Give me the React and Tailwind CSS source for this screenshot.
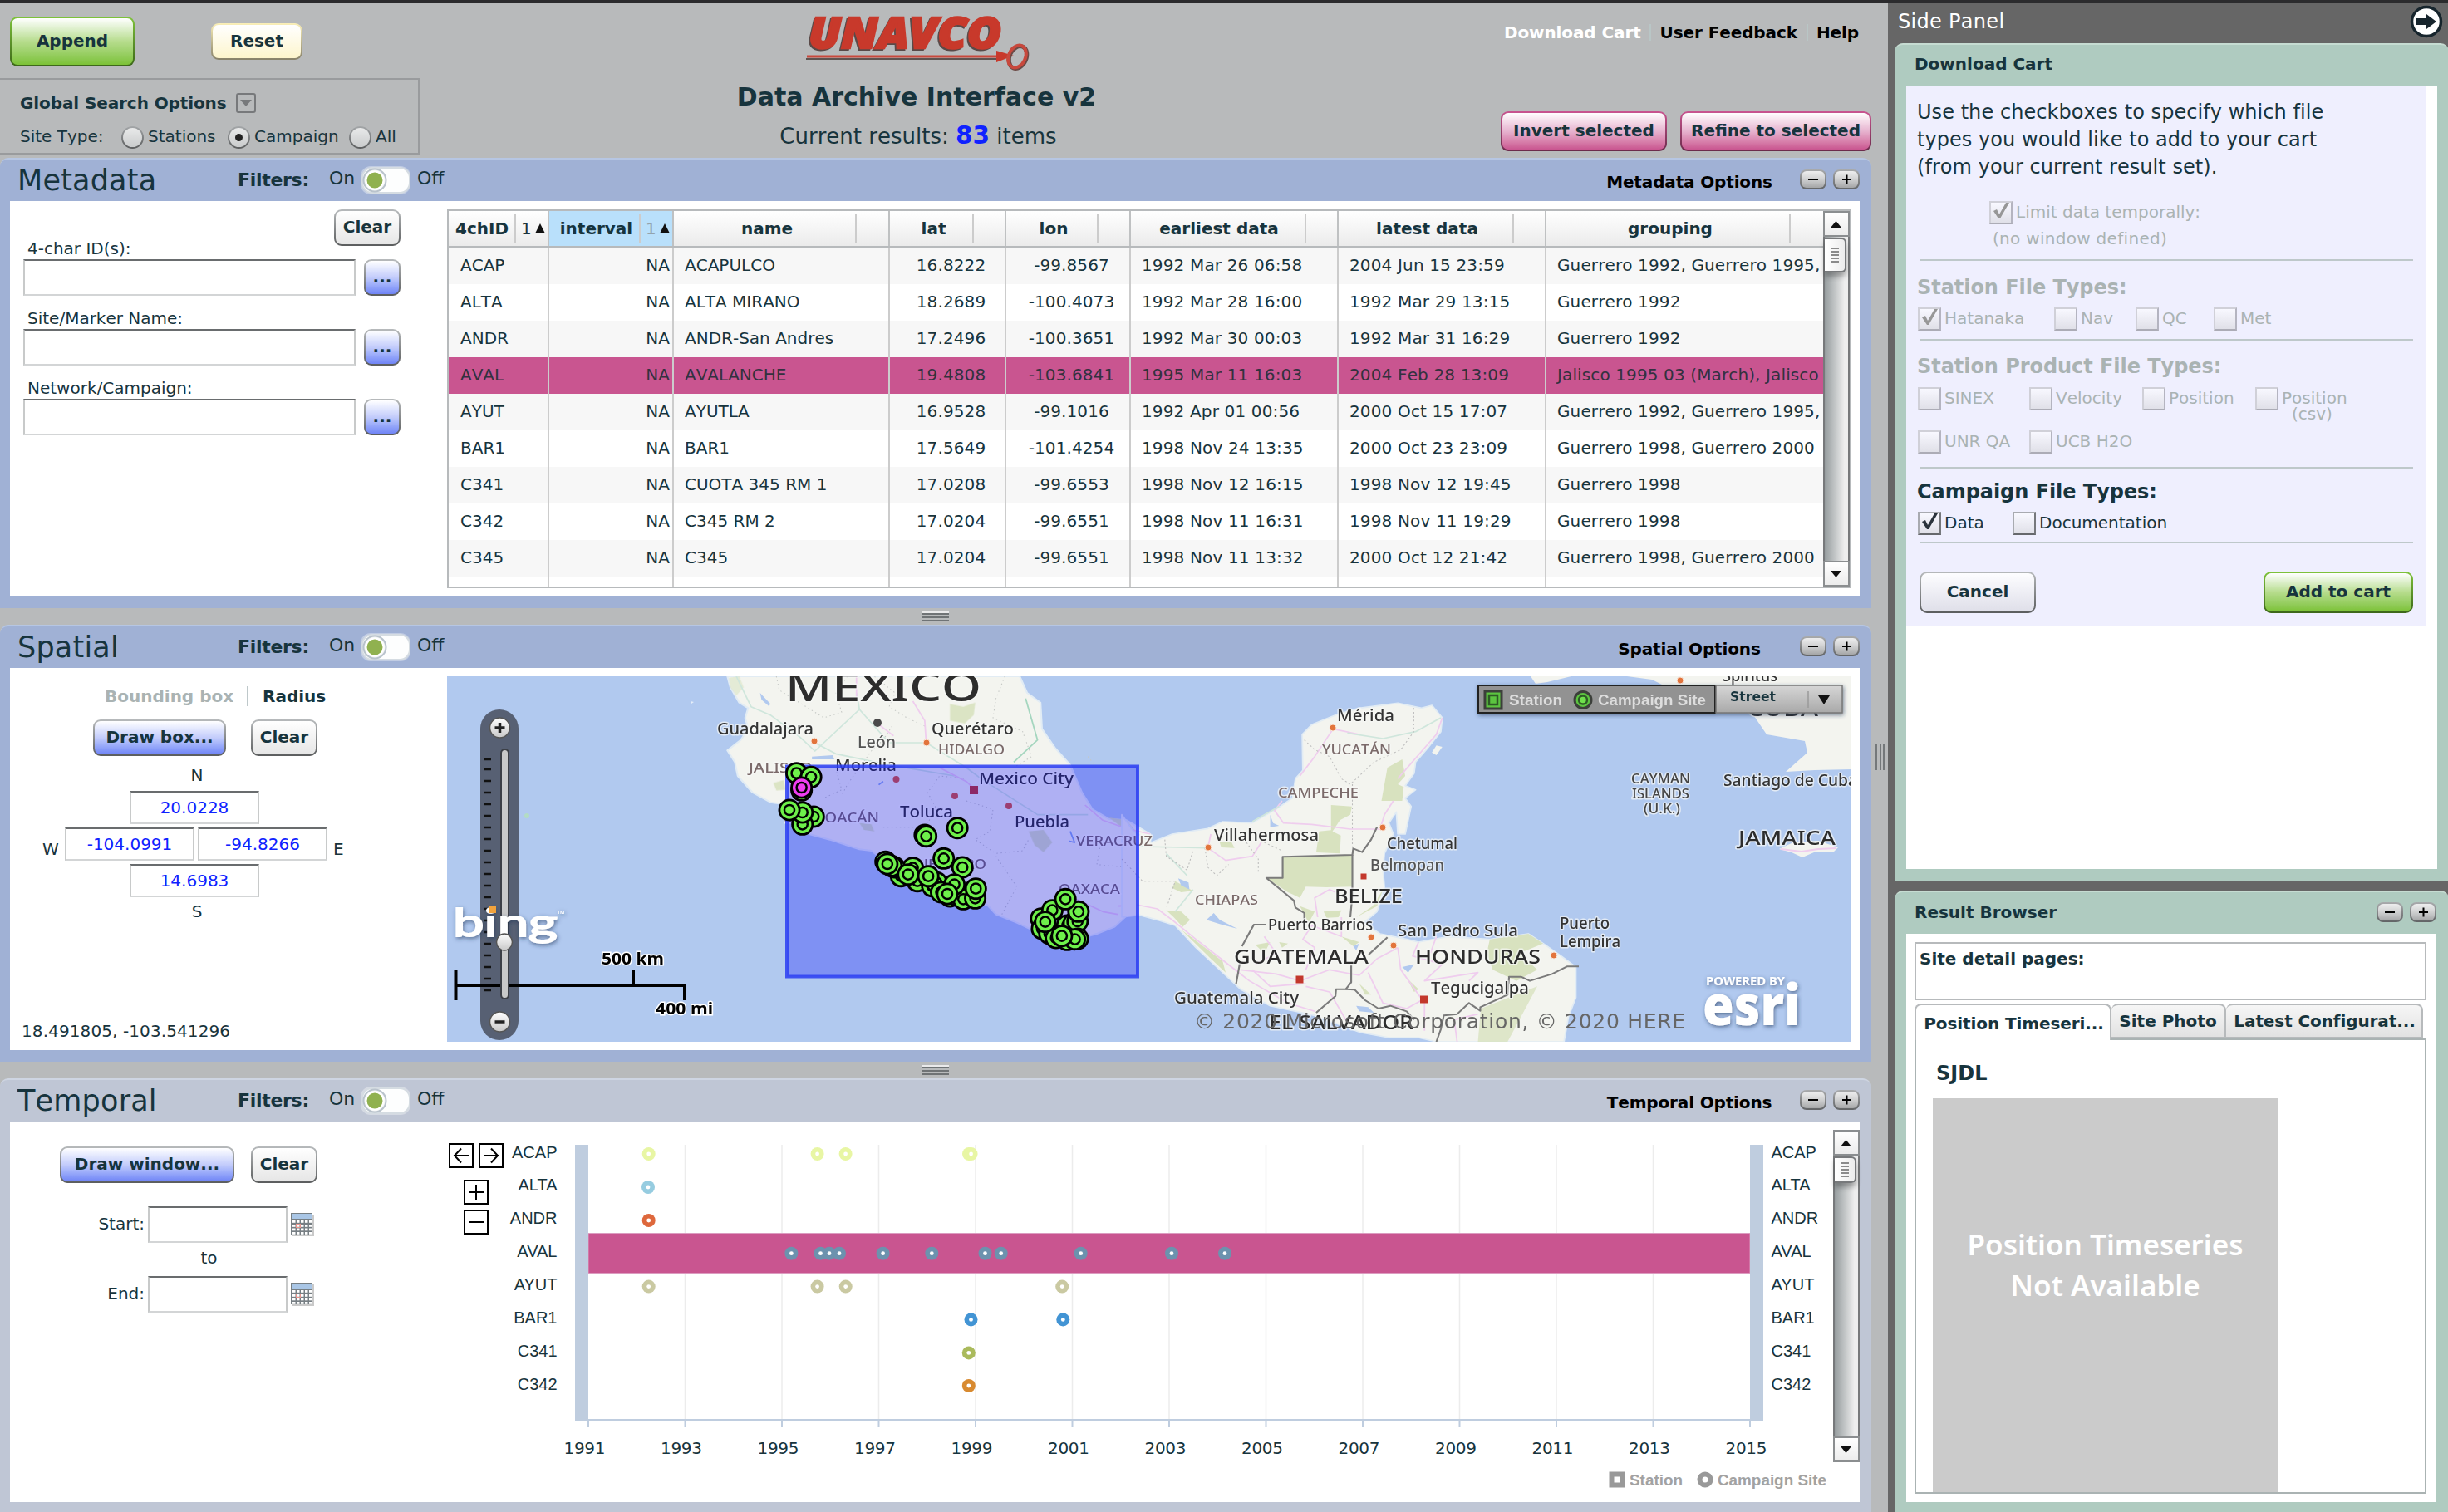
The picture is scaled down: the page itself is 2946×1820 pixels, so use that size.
import React from "react";

const rows = [
  ["ACAP", "ACAPULCO", "16.8222", "-99.8567", "1992 Mar 26 06:58", "2004 Jun 15 23:59", "Guerrero 1992, Guerrero 1995,"],
  ["ALTA", "ALTA MIRANO", "18.2689", "-100.4073", "1992 Mar 28 16:00", "1992 Mar 29 13:15", "Guerrero 1992"],
  ["ANDR", "ANDR-San Andres", "17.2496", "-100.3651", "1992 Mar 30 00:03", "1992 Mar 31 16:29", "Guerrero 1992"],
  ["AVAL", "AVALANCHE", "19.4808", "-103.6841", "1995 Mar 11 16:03", "2004 Feb 28 13:09", "Jalisco 1995 03 (March), Jalisco"],
  ["AYUT", "AYUTLA", "16.9528", "-99.1016", "1992 Apr 01 00:56", "2000 Oct 15 17:07", "Guerrero 1992, Guerrero 1995,"],
  ["BAR1", "BAR1", "17.5649", "-101.4254", "1998 Nov 24 13:35", "2000 Oct 23 23:09", "Guerrero 1998, Guerrero 2000"],
  ["C341", "CUOTA 345 RM 1", "17.0208", "-99.6553", "1998 Nov 12 16:15", "1998 Nov 12 19:45", "Guerrero 1998"],
  ["C342", "C345 RM 2", "17.0204", "-99.6551", "1998 Nov 11 16:31", "1998 Nov 11 19:29", "Guerrero 1998"],
  ["C345", "C345", "17.0204", "-99.6551", "1998 Nov 11 13:32", "2000 Oct 12 21:42", "Guerrero 1998, Guerrero 2000"],
];

const tones = {
  gray: ["from-[#b7babc] to-[#5b5d5e]", "from-white to-[#e6e6e6]"],
  blue: ["from-[#b7babc] to-[#5b5d5e]", "from-white via-[#c3ccfb] to-[#7084f6]"],
  green: ["from-[#7fc43a] to-[#3c661a]", "from-white via-[#b6dc8c] to-[#7cc235]"],
  cream: ["from-[#fbf0b8] to-[#88826a]", "from-white to-[#fdf5cc]"],
  pink: ["from-[#c95590] to-[#6b2b4b]", "from-white via-[#e6b3cf] to-[#c95590]"],
  lav: ["from-[#b7babc] to-[#5b5d5e]", "from-[#fdfdff] to-[#dfdfe9]"],
};

function Btn({ tone = "gray", className, children }) {
  const [edge, face] = tones[tone];
  return (
    <button className={`block shrink-0 rounded-[9px] bg-linear-to-b p-[2px] font-bold ${edge} ${className}`}>
      <span className={`flex h-full w-full items-center justify-center rounded-[7px] bg-linear-to-b pb-[2px] whitespace-nowrap ${face}`}>
        {children}
      </span>
    </button>
  );
}

function MiniBtn({ plus }) {
  return (
    <span className="block h-6 w-8 rounded-[8px] bg-linear-to-b from-[#a9abad] to-[#626466] p-[2px]">
      <span className="flex h-full w-full items-center justify-center rounded-[6px] bg-linear-to-b from-white/80 to-white/40">
        <svg width="16" height="16" viewBox="0 0 16 16" className="-mt-px">
          <path d={plus ? "M3 8H14M8.500 2.500V13.500" : "M2 8H14"} stroke="#000" strokeWidth="2" />
        </svg>
      </span>
    </span>
  );
}

function Field({ className, children }) {
  return (
    <div className={`flex shrink-0 items-center justify-center border-2 border-t-[#696c6e] border-r-[#c8caca] border-b-[#d3d5d6] border-l-[#c8caca] bg-white text-[#0f22ff] ${className}`}>
      {children}
    </div>
  );
}

function Toggle() {
  return (
    <svg width="62" height="36" viewBox="0 0 62 36" className="shrink-0">
      <rect x="1" y="1" width="60" height="34" rx="12" fill="#ffffff" opacity=".35" />
      <rect x="3" y="3" width="57" height="30" rx="12" fill="#fdfefe" stroke="#d5dce2" strokeWidth="2" />
      <circle cx="18" cy="18" r="13.500" fill="#f4f6f6" stroke="#b9c3cc" strokeWidth="2" />
      <circle cx="18" cy="18" r="10.500" fill="#90b14f" stroke="#ffffff" strokeWidth="2" />
    </svg>
  );
}

function Panel({ title, bar, options, height, children }) {
  return (
    <section className={`flex shrink-0 flex-col rounded-t-[10px] border-t-2 pr-[14px] pb-[14px] pl-3 ${bar} ${height}`}>
      <header className="flex h-[50px] shrink-0 items-center">
        <h2 className="w-[263px] pl-[9px] text-[35px] tracking-[0.2px]">{title}</h2>
        <span className="w-[109px] pb-[1px] pl-[11px] text-[22px] font-bold tracking-[-0.3px]">Filters:</span>
        <span className="w-[49px] pb-[4px] pl-3 text-[22px]">On</span>
        <Toggle />
        <span className="pb-[4px] pl-[7px] text-[22px]">Off</span>
        <span className="ml-auto w-[204px] pt-1 text-center font-bold tracking-[-0.15px] text-black">{options}</span>
        <span className="ml-[31px] flex gap-2 self-start pt-3">
          <MiniBtn />
          <MiniBtn plus />
        </span>
      </header>
      <div className="flex min-h-0 flex-1 bg-white">{children}</div>
    </section>
  );
}

function Grip() {
  return (
    <div className="flex h-5 shrink-0 items-start justify-center pt-1">
      <div className="flex w-8 flex-col gap-[2px] border-t-2 border-white/70">
        <i className="h-[2px] bg-[#6f7375]" />
        <i className="h-[2px] bg-[#6f7375]" />
        <i className="h-[2px] bg-[#6f7375]" />
      </div>
    </div>
  );
}

function Arrow({ down }) {
  return (
    <span className="flex h-[31px] shrink-0 items-center justify-center border-2 border-[#8b8e90] bg-linear-to-b from-white to-[#ececec]">
      <svg width="14" height="10" viewBox="0 0 14 10">
        <path d={down ? "M0 1H13L6.500 9Z" : "M0 9H13L6.500 1Z"} fill="#111" />
      </svg>
    </span>
  );
}

function Scrollbar({ className, thumb }) {
  return (
    <div className={`flex w-8 shrink-0 flex-col bg-linear-to-r from-[#8f9698] to-[#eeeeee] to-80% ${className}`}>
      <Arrow />
      <div className="flex-1 border-x-2 border-l-[#77797b] border-r-[#77797b]">
        <div className={`mt-px flex w-[26px] flex-col items-center justify-center gap-[2px] rounded-r-[6px] border-2 border-l-0 border-[#77797b] bg-linear-to-r from-white to-[#ececec] shadow-[0_5px_6px_rgba(0,0,0,.3)] ${thumb}`}>
          <i className="h-[2px] w-[10px] bg-[#8a8a8a]" />
          <i className="h-[2px] w-[10px] bg-[#8a8a8a]" />
          <i className="h-[2px] w-[10px] bg-[#8a8a8a]" />
          <i className="h-[2px] w-[10px] bg-[#8a8a8a]" />
          <i className="h-[2px] w-[10px] bg-[#8a8a8a]" />
        </div>
      </div>
      <Arrow down />
    </div>
  );
}

function Radio({ on }) {
  return (
    <span className="flex size-[27px] shrink-0 items-center justify-center rounded-full bg-linear-to-b from-[#a4a7a9] to-[#5b5d5e] p-[2px]">
      <span className="flex size-full items-center justify-center rounded-full bg-linear-to-b from-[#e9eaea] to-[#c9cbcc]">
        {on && <i className="size-[9px] rounded-full bg-[#222]" />}
      </span>
    </span>
  );
}

function TopHeader() {
  return (
    <div className="flex h-[186px] shrink-0">
      <div className="w-[505px] shrink-0">
        <div className="flex h-[90px] pl-3">
          <Btn tone="green" className="mt-4 h-[60px] w-[150px]">Append</Btn>
          <Btn tone="cream" className="mt-6 ml-[92px] h-[44px] w-[110px]">Reset</Btn>
        </div>
        <div className="h-[92px] border-2 border-l-0 border-[#999b9d] pl-6">
          <div className="flex h-[52px] items-center pt-[3px]">
            <b className="w-[260px] tracking-[-0.1px]">Global Search Options</b>
            <svg width="24" height="24" viewBox="0 0 24 24">
              <rect x="1" y="1" width="22" height="22" rx="2" fill="none" stroke="#77797b" strokeWidth="2" />
              <path d="M5 8H19L12 16Z" fill="#77797b" />
            </svg>
          </div>
          <div className="flex h-[34px] items-center">
            <span className="w-[122px] pb-[2px]">Site Type:</span>
            <Radio />
            <span className="w-[101px] pb-[2px] pl-[5px]">Stations</span>
            <Radio on />
            <span className="w-[119px] pb-[2px] pl-[5px]">Campaign</span>
            <Radio />
            <span className="pb-[2px] pl-[5px]">All</span>
          </div>
        </div>
      </div>
      <div className="flex flex-1 flex-col items-center">
        <svg width="290" height="86" viewBox="0 0 290 86" className="shrink-0">
          <g fontFamily="Open Sans, sans-serif" fontWeight="800" fontStyle="italic" fontSize="52">
            <text x="13" y="56" textLength="232" lengthAdjust="spacingAndGlyphs" fill="#5a4a48" stroke="#5a4a48" strokeWidth="2">UNAVCO</text>
            <text x="15" y="54" textLength="232" lengthAdjust="spacingAndGlyphs" fill="#c8392b" stroke="#c8392b" strokeWidth="2.500">UNAVCO</text>
          </g>
          <path d="M12 67H244" stroke="#5d5350" strokeWidth="2" />
          <path d="M13 64H246" stroke="#c8483c" strokeWidth="3" />
          <path d="M241 57L262 63L241 71Z" fill="#c8392b" />
          <ellipse cx="267" cy="65" rx="10" ry="14" transform="rotate(25 267 65)" fill="none" stroke="#6b4a46" strokeWidth="5" />
          <ellipse cx="266" cy="64" rx="10" ry="14" transform="rotate(25 266 64)" fill="none" stroke="#c8483c" strokeWidth="4" />
        </svg>
        <h1 className="flex h-[54px] items-center text-[30px] font-bold">Data Archive Interface v2</h1>
        <p className="-mt-[3px] flex h-[46px] items-center pl-1 text-[26px] whitespace-pre">
          Current results: <b className="text-[29.5px]">
            <span className="text-[#0f22ff]">83</span>
          </b> items
        </p>
      </div>
      <div className="flex w-[551px] shrink-0 flex-col items-end">
        <nav className="mt-[19px] flex h-8 items-center pr-[15px] font-bold tracking-[-0.1px] text-black">
          <span className="pr-[10px] text-white">Download Cart</span>
          <span className="border-l-2 border-[#b9c6c6] px-[11px]">User Feedback</span>
          <span className="border-l-2 border-[#b9c6c6] pl-[10px]">Help</span>
        </nav>
        <div className="mt-[79px] flex gap-4">
          <Btn tone="pink" className="h-[48px] w-[200px]">Invert selected</Btn>
          <Btn tone="pink" className="h-[48px] w-[230px]">Refine to selected</Btn>
        </div>
      </div>
    </div>
  );
}

function SortMark({ dim }) {
  return (
    <span className={`flex items-center gap-[4px] pl-[6px] ${dim ? "text-[#93a3ad]" : ""}`}>
      1
      <svg width="13" height="14" viewBox="0 0 13 14"><path d="M0 13H12L6 1Z" fill="#111" /></svg>
    </span>
  );
}

const cols = "grid grid-cols-[121px_150px_260px_140px_150px_250px_250px_333px]";

function Head({ children, w, sort, blue, last }) {
  return (
    <div className={`flex items-center ${last ? "" : "border-r-2 border-[#bfc1c2]"} ${blue ? "bg-[#b9e0fb]" : "bg-linear-to-b from-white to-[#ebebeb]"}`}>
      <b className={`flex h-[34px] items-center justify-center border-r-2 border-[#cccccc] ${w}`}>{children}</b>
      {sort}
    </div>
  );
}

function Table() {
  return (
    <div className="mt-[10px] flex h-[456px] w-[1690px] border-2 border-[#b7babc]">
      <div className="w-[1654px] overflow-hidden">
        <div className={`h-11 border-b-2 border-[#b7babc] ${cols}`}>
          <Head w="w-[81px] pl-px" sort={<SortMark />}>4chID</Head>
          <Head w="w-[110px] pl-[5px]" blue sort={<SortMark dim />}>interval</Head>
          <Head w="w-[220px] pl-[6px]">name</Head>
          <Head w="w-[101px] pl-[6px]">lat</Head>
          <Head w="w-[111px] pl-[5px]">lon</Head>
          <Head w="w-[211px] pl-[3px]">earliest data</Head>
          <Head w="w-[211px] pl-[4px]">latest data</Head>
          <Head w="w-[294px] pl-[6px]" last>grouping</Head>
        </div>
        {[...rows, []].map((r, i) => (
          <div
            key={i}
            className={`${cols} *:flex *:h-full *:items-center *:border-[#cccccc] *:pb-[2px] *:whitespace-nowrap ${i === 3 ? "bg-[#c95590] text-[#33313f]" : i % 2 ? "bg-white" : "bg-[#f7f7f7]"} h-11`}
          >
            <span className="border-r-2 pl-[14px]">{r[0]}</span>
            <span className="justify-end border-r-2 pr-[3px]">{r[0] && "NA"}</span>
            <span className="border-r-2 pl-[13px]">{r[1]}</span>
            <span className="justify-center border-r-2 pl-[9px] tracking-[0.1px]">{r[2]}</span>
            <span className="justify-center border-r-2 pl-[9px] tracking-[0.1px]">{r[3]}</span>
            <span className="border-r-2 pl-[13px] tracking-[0.15px]">{r[4]}</span>
            <span className="border-r-2 pl-[13px] tracking-[0.15px]">{r[5]}</span>
            <span className="mr-1 overflow-hidden pl-[13px] tracking-[0.12px]">{r[6]}</span>
          </div>
        ))}
      </div>
      <Scrollbar className="h-[452px]" thumb="h-[42px]" />
    </div>
  );
}

function LabeledInput({ label, className }) {
  return (
    <>
      <div className={`flex items-center pl-[21px] ${className}`}>{label}</div>
      <div className="flex gap-[10px] pl-4">
        <Field className="h-11 w-[400px]" />
        <Btn tone="blue" className="h-11 w-11">...</Btn>
      </div>
    </>
  );
}

const W = "#7b6a6a";
const D = "#333333";
const labels = [
  ["MEXICO", 407, 643, 30, 48, "#2d2d2d"],
  ["Guadalajara", 325, 441, 70, 20, D],
  ["León", 494, 540, 86, 20, "#555"],
  ["Querétaro", 583, 682, 70, 20, D],
  ["HIDALGO", 591, 671, 94, 17, W],
  ["JALISCO", 363, 440, 116, 17, W],
  ["Morelia", 467, 541, 114, 20, D],
  ["Mexico City", 640, 754, 130, 20, D],
  ["Toluca", 545, 609, 170, 20, D],
  ["Puebla", 683, 749, 182, 20, D],
  ["MICHOACÁN", 405, 520, 176, 17, W],
  ["VERACRUZ", 757, 849, 204, 17, W],
  ["GUERRERO", 552, 649, 232, 17, W],
  ["OAXACA", 736, 810, 262, 17, W],
  ["Mérida", 1071, 1140, 54, 20, D],
  ["YUCATÁN", 1053, 1136, 94, 17, W],
  ["CAMPECHE", 1000, 1097, 146, 17, W],
  ["Villahermosa", 923, 1049, 198, 20, D],
  ["Chetumal", 1131, 1216, 208, 20, D],
  ["Belmopan", 1111, 1200, 234, 20, "#555"],
  ["BELIZE", 1068, 1150, 273, 24, "#2d2d2d"],
  ["CHIAPAS", 900, 976, 275, 17, W],
  ["Puerto Barrios", 988, 1114, 306, 19, D],
  ["San Pedro Sula", 1144, 1289, 313, 20, D],
  ["GUATEMALA", 947, 1109, 346, 24, "#2d2d2d"],
  ["HONDURAS", 1165, 1316, 346, 24, "#2d2d2d"],
  ["Guatemala City", 875, 1025, 394, 20, D],
  ["Tegucigalpa", 1184, 1302, 382, 20, D],
  ["EL SALVADOR", 989, 1163, 425, 23, "#2d2d2d"],
  ["Puerto", 1339, 1399, 304, 19, D],
  ["Lempira", 1339, 1412, 326, 19, D],
  ["CAYMAN", 1425, 1496, 129, 16, "#444"],
  ["ISLANDS", 1426, 1495, 147, 16, "#444"],
  ["(U.K.)", 1440, 1484, 165, 16, "#444"],
  ["Santiago de Cuba", 1536, 1697, 132, 20, D],
  ["JAMAICA", 1554, 1671, 203, 24, "#2d2d2d"],
  ["CUBA", 1564, 1650, 48, 28, "#2d2d2d"],
  ["Spíritus", 1535, 1601, 6, 20, D],
];

const sites = [
  [388, 350], [437, 364], [405, 412], [446, 507], [408, 535], [408, 492], [364, 483],
  [820, 573], [825, 578], [930, 548],
  [780, 692], [740, 722], [718, 690], [708, 685], [688, 670], [694, 678],
  [795, 740], [764, 716], [845, 758], [860, 745], [832, 722], [884, 658], [947, 690],
  [875, 780], [905, 795], [925, 790], [950, 805], [990, 802], [920, 752], [992, 767], [896, 786],
  [1212, 875], [1215, 912], [1250, 845], [1240, 930], [1262, 945], [1300, 900], [1322, 892], [1335, 885],
  [1338, 850], [1294, 805], [1226, 887], [1300, 952], [1336, 948], [1326, 950], [1282, 938],
];

const cities = [[442, 78], [577, 80], [1066, 62], [1126, 182], [916, 206], [1112, 314], [1139, 324], [1332, 336], [1484, 5]];
const towns = [[540.5, 124], [611, 144], [676, 156]];
const caps = [[634, 137, 10], [1103, 241, 7], [1026, 365, 9], [1175.5, 389, 9]];
const tickYs = [100, 112, ...Array.from({ length: 19 }, (_, i) => 126 + i * 14)];

function Site({ x, y, fill = "#6ef04a" }) {
  return (
    <g>
      <circle cx={x} cy={y} r="13.500" fill="#000" />
      <circle cx={x} cy={y} r="9" fill="none" stroke={fill} strokeWidth="3.400" />
      <circle cx={x} cy={y} r="4.800" fill={fill} />
    </g>
  );
}

function MapView() {
  const lon = (a) => a / 2.8 + 282;
  return (
    <svg width="1690" height="440" viewBox="0 0 1690 440" className="mt-[10px] block shrink-0" fontFamily="Noto Sans, sans-serif">
      <defs>
        <linearGradient id="street" x1="0" y1="0" x2="0" y2="1">
          <stop offset="0" stopColor="#d6d6d6" />
          <stop offset="1" stopColor="#a9a9a9" />
        </linearGradient>
        <linearGradient id="knob" x1="0" y1="0" x2="0" y2="1">
          <stop offset="0" stopColor="#ffffff" />
          <stop offset="1" stopColor="#c8c8c8" />
        </linearGradient>
        <filter id="soft" x="-20%" y="-20%" width="150%" height="160%">
          <feDropShadow dx="1" dy="2" stdDeviation="2.500" floodColor="#223355" floodOpacity=".6" />
        </filter>
      </defs>
      <rect width="1690" height="440" fill="#b1c9ef" />

      <g transform="translate(282 0) scale(.35714 .33333)" strokeLinejoin="round">
        <path
          d="M155 0L165 40L195 95L225 115L215 150L225 190L200 230L155 268L180 310L190 360L240 420L300 455L330 460L370 520L430 570L500 590L600 625L640 630L700 680L800 740L900 800L960 835L1030 825L1060 860L1130 890L1170 910L1250 950L1350 945L1400 930L1460 905L1500 865L1530 845L1580 862V570L1500 520L1440 515L1385 480L1350 420L1310 320L1260 260L1215 190L1210 95L1165 60L1140 0Z"
          fill="#f3f4ef" stroke="#e2ecf4" strokeWidth="6"
        />
        <g fill="#d8e2bf" opacity=".9">
          <path d="M905 100L950 110L990 95L985 140L955 170L905 160Z" />
          <path d="M310 385L345 375L350 410L320 412Z" />
          <path d="M160 5L195 0L210 40L185 70L165 40Z" opacity=".6" />
          <path d="M1170 560L1220 555L1250 600L1220 635L1190 610Z" />
          <path d="M600 530L640 535L650 560L615 555Z" />
          <path d="M1440 510L1500 520L1530 560L1490 550Z" />
        </g>
        <g fill="none" stroke="#c4c7c4" strokeWidth="3" strokeDasharray="4 10">
          <path d="M320 0L330 50L420 110L480 150L540 130L520 60L560 0" />
          <path d="M710 180L680 230L640 270L600 330L560 390L540 430" />
          <path d="M820 180L760 150L700 110L720 60L650 0" />
          <path d="M1090 0L1060 80L1050 150L1150 200L1180 290L1120 330" />
          <path d="M680 545L820 545L860 480L830 420L870 360L960 370" />
          <path d="M520 330L540 410L480 440" />
          <path d="M960 450L1050 480L1040 560L990 590L1060 640L1150 630L1170 590" />
          <path d="M1060 650L1130 760L1080 860" />
          <path d="M1410 620L1400 680L1500 690L1560 740" />
          <path d="M1370 290L1400 330" />
        </g>
        <g fill="none" stroke="#cfe6dc" strokeWidth="5">
          <path d="M185 0L235 110L300 140L400 220L450 270L600 120L590 60" />
          <path d="M600 120L700 240L825 240L960 330L1010 370L1200 500L1370 500" />
          <path d="M450 240L520 280L700 320L920 360" />
          <path d="M1160 80L1200 230L1120 310" stroke="#a5d6bf" />
        </g>
        <g fill="none" stroke="#efcdee" strokeWidth="5">
          <path d="M780 90L820 160L825 240" />
          <path d="M590 0V80" />
          <path d="M660 170L715 215" />
          <path d="M1360 465L1420 520L1500 550L1580 570" />
          <path d="M1300 790L1420 850L1470 860M1470 830L1580 825" />
          <path d="M870 330L960 380L1000 420" />
        </g>
        <path d="M440 290L510 285L515 300L440 300ZM265 60L300 100L295 108L270 85Z" fill="#b1c9ef" />
        <path d="M665 392L680 380M1310 560L1325 600L1305 595" stroke="#8aa9ee" strokeWidth="5" fill="none" />
      </g>

      <g transform="translate(812 0) scale(.35714 .33333)" strokeLinejoin="round">
        <path
          d="M0 500L40 560L100 600L170 570L290 550L340 525L440 530L520 480L575 440L585 370L610 340L608 210L640 175L720 140L800 115L930 97L1010 115L1045 105L1080 150L1075 200L1030 260L990 310L985 350L955 395L990 410L955 440L975 470L955 570L930 570L925 490L900 530L915 570L885 640L880 700L885 760L860 850L815 890L870 930L960 950L1000 960L1100 940L1240 950L1370 930L1420 965L1480 1010L1530 1050L1530 1160L1505 1230L1490 1320H1060L1000 1305L900 1305L800 1285L650 1225L500 1190L400 1130L350 1080L250 980L180 900L120 880L60 862L0 870Z"
          fill="#f3f4ef" stroke="#e2ecf4" strokeWidth="5"
        />
        <path d="M1045 275L1060 250L1080 255L1060 285Z" fill="#f3f4ef" />
        <g fill="#d8e2bf">
          <path d="M542 652L777 645V760L690 762L620 760L600 800L560 780L487 728H542Z" />
          <path d="M895 330L945 300L955 360L930 390L950 400L945 450H875Z" />
          <path d="M705 465L775 470L770 500L735 520L710 560L738 575L735 640L655 636L665 560L705 556Z" />
          <path d="M180 740L240 775L200 780L170 765Z" />
          <path d="M150 845L200 850L230 880L205 905L175 870Z" />
          <path d="M200 915L250 955L340 1030L350 1070L300 1020Z" />
          <path d="M1240 950L1370 930L1420 965L1340 1000L1400 1060L1330 1100L1250 1060L1230 1000Z" />
          <path d="M1210 1200L1400 1120L1340 1240L1300 1320H1200Z" opacity=".8" />
          <path d="M680 850L740 845L730 870L690 872ZM790 870L860 830L880 770L845 830ZM600 830L650 850L630 890Z" />
          <path d="M450 970L500 960L480 1000ZM530 960L560 965L540 980ZM740 940L800 960L780 975ZM960 1090L1000 1130L985 1140ZM800 1110L840 1150L820 1150Z" />
          <path d="M330 600L370 600L380 620L335 618Z" />
        </g>
        <path d="M500 500L510 530L530 540L500 545ZM285 880L310 855L330 880L390 912L330 895ZM190 730L225 745L228 770L200 755ZM780 975L800 965L790 990ZM790 1190L830 1195L850 1215L800 1210ZM945 1050L985 1040L965 1070Z" fill="#b1c9ef" />
        <g fill="none" stroke="#efcdee" strokeWidth="5">
          <path d="M712 190L650 290L600 360M540 450L515 485L545 530L640 535L770 552L870 552L885 500L915 450" />
          <path d="M712 190L800 210M1080 150L1060 210L930 370" />
          <path d="M300 570L290 620L350 665L440 650L470 600" />
          <path d="M50 825L120 840L170 880L250 950L370 1050L430 1100L560 1180L650 1210" />
          <path d="M400 1060L520 1075L600 1100L700 1060L800 1080L860 1020L930 980" />
          <path d="M660 870L650 800L700 770L720 780M740 870V940L640 900L610 950L650 980L620 1060" />
          <path d="M480 940L520 1000L450 1040M620 1120L700 1140L760 1250M440 1060L500 1120L620 1110" />
          <path d="M930 980L940 1060L1020 1180V1280M1000 960L980 1010L1080 1040L1020 1100L1200 1070L1170 1100" />
          <path d="M830 1070L880 1180L960 1200L1010 1170M1060 940L1040 1000M1130 1320L1120 1240L1200 1220" />
        </g>
        <g fill="none" stroke="#cfe6dc" strokeWidth="5">
          <path d="M60 615L290 620M440 525L530 470M760 205L880 225L990 200L1075 150M150 640L220 720M180 850L240 770" />
        </g>
        <g fill="none" stroke="#bdbdbd" strokeWidth="3" strokeDasharray="6 8">
          <path d="M984 115V200L940 265L850 310L770 390L740 370L700 290L650 265L615 230" />
          <path d="M777 390V640M145 590L150 650L220 700L240 630M280 620L290 690L320 720L360 680M0 660L70 740H180L150 840M420 600L460 660V710M480 600L540 630" />
        </g>
        <g fill="none" stroke="#7b7b7b" strokeWidth="6">
          <path d="M860 545L840 590L810 635L780 622L777 645L542 652V728H487L580 810L585 835L615 855V880" />
          <path d="M777 645V790L770 870" />
          <path d="M487 897H445L405 975M398 1035L385 1112M832 1005L895 943M773 1045V1105L755 1130H722L720 1155L655 1215" />
          <path d="M755 1130L785 1132L820 1170L865 1200L905 1190L960 1210L985 1240" />
          <path d="M1060 1320L1075 1275L1085 1225L1130 1220L1170 1180L1208 1208V1195L1300 1150L1305 1085L1345 1085L1375 1100L1450 1075L1500 1048H1540" />
        </g>
      </g>

      <path d="M1304 0L1310 9L1324 7L1353 0ZM1420 0L1450 4L1468 13L1531 17L1573 48L1588 70L1634 78L1637 92L1611 115L1646 113L1690 112V0Z" fill="#f3f4ef" />
      <path d="M1603 208L1620 200L1650 198L1674 206L1668 212L1645 212L1631 218L1618 212Z" fill="#f3f4ef" />
      <path d="M1605 208L1630 211L1650 208L1672 207" stroke="#efcdee" strokeWidth="2" fill="none" />
      <path d="M293 30L297 31L294 33Z" fill="#e6eef8" />
      <circle cx="96" cy="168" r="3" fill="#b3dcc4" />

      {cities.map(([x, y]) => <circle key={x} cx={x} cy={y} r="4" fill="#e2743c" stroke="#f8e6da" strokeWidth="1" />)}
      {towns.map(([x, y]) => <circle key={x} cx={x} cy={y} r="4" fill="#d8563c" />)}
      <circle cx="518" cy="56" r="5" fill="#4a4a4a" />
      {caps.map(([x, y, s]) => <rect key={x} x={x - s / 2} y={y - s / 2} width={s} height={s} fill="#c3382c" />)}

      <g stroke="#f7f8f6" strokeWidth="3" strokeOpacity=".7" paintOrder="stroke" strokeLinejoin="round" fontWeight="500">
        {labels.map(([t, a, b, y, s, c]) => (
          <text key={t + y} x={a} y={y} fontSize={s} textLength={b - a} lengthAdjust="spacingAndGlyphs" fill={c}>{t}</text>
        ))}
      </g>
      <text x="899" y="424" fontFamily="DejaVu Sans, sans-serif" fontSize="25" textLength="591" fill="#666">© 2020 Microsoft Corporation, © 2020 HERE</text>

      <rect x="409" y="108.500" width="422" height="253" fill="#0000ff" fillOpacity=".28" stroke="#2a3df2" strokeOpacity=".85" strokeWidth="4" />

      {sites.map(([x, y], i) => <Site key={i} x={lon(x)} y={y / 3} />)}
      <Site x={lon(405)} y={134} fill="#ee3df0" />

      <rect x="40" y="40" width="46" height="398" rx="23" fill="#3d4250" fillOpacity=".78" />
      {tickYs.map((y) => <path key={y} d={`M45 ${y}H53`} stroke="#111" strokeWidth="2.500" />)}
      <g stroke="#000" strokeWidth="4" fill="none">
        <path d="M10 372H287M10.500 354V390M224 354V372M286 372V390" />
      </g>
      <rect x="65" y="88" width="9" height="300" rx="4.500" fill="#c9c9c9" stroke="#3c3f46" strokeWidth="2" />
      <circle cx="63.500" cy="62" r="12" fill="url(#knob)" stroke="#555" strokeWidth="1.500" />
      <path d="M57.500 62H69.500M63.500 56V68" stroke="#222" strokeWidth="3.500" />
      <circle cx="63.500" cy="416" r="12" fill="url(#knob)" stroke="#555" strokeWidth="1.500" />
      <path d="M57.500 416H69.500" stroke="#222" strokeWidth="3.500" />
      <g fontSize="20" fontWeight="700" fill="#000" stroke="#fff" strokeWidth="3" paintOrder="stroke">
        <text x="186" y="347" textLength="75" lengthAdjust="spacingAndGlyphs">500 km</text>
        <text x="251" y="407" textLength="69" lengthAdjust="spacingAndGlyphs">400 mi</text>
      </g>
      <g filter="url(#soft)" fill="#fff">
        <text x="7" y="313" fontSize="47" fontFamily="Lato, sans-serif" textLength="126" lengthAdjust="spacingAndGlyphs" stroke="#fff" strokeWidth="1.800">bing</text>
        <text x="133" y="290" fontSize="11" fontWeight="700">™</text>
      </g>
      <rect x="50" y="277" width="9" height="8" fill="#f2a33c" />
      <ellipse cx="69" cy="320" rx="9.500" ry="10" fill="url(#knob)" stroke="#555" strokeWidth="1.500" />

      <g filter="url(#soft)">
        <rect x="1241" y="11" width="285" height="33" fill="#929292" stroke="#222" strokeWidth="2" />
        <rect x="1527" y="11" width="152" height="33" fill="url(#street)" stroke="#777" strokeWidth="1.500" />
      </g>
      <g fontFamily="Liberation Sans, sans-serif" fontWeight="700" fontSize="19" fill="#dddddd">
        <text x="1278" y="35" textLength="64" lengthAdjust="spacingAndGlyphs">Station</text>
        <text x="1385" y="35" textLength="130" lengthAdjust="spacingAndGlyphs">Campaign Site</text>
      </g>
      <rect x="1249" y="18" width="20" height="21" fill="#5cc440" stroke="#3c3f3a" strokeWidth="3" />
      <rect x="1254" y="23" width="10" height="11" fill="none" stroke="#2e5a26" strokeWidth="2.500" />
      <circle cx="1367" cy="28.500" r="10" fill="#5cc440" stroke="#3c3f3a" strokeWidth="3" />
      <circle cx="1367" cy="28.500" r="5" fill="#6fe04c" stroke="#2e5a26" strokeWidth="2.500" />
      <text x="1544" y="30" fontFamily="DejaVu Sans, sans-serif" fontWeight="700" fontSize="16" textLength="55" lengthAdjust="spacingAndGlyphs" fill="#17343d">Street</text>
      <path d="M1638 18V38" stroke="#9a9a9a" strokeWidth="1.500" />
      <path d="M1650 23H1664L1657 34Z" fill="#111" />

      <g filter="url(#soft)" fill="#fff" fontFamily="Open Sans, sans-serif">
        <text x="1515" y="372" fontSize="14" fontWeight="700" textLength="95" lengthAdjust="spacingAndGlyphs">POWERED BY</text>
        <text x="1511" y="420" fontSize="67" fontWeight="800" textLength="118" lengthAdjust="spacingAndGlyphs">esri</text>
      </g>
    </svg>
  );
}

const series = [
  ["ACAP", 1389, "#e8f6a4", [780.7, 983.6, 1017.6, 1166, 1168.6]],
  ["ALTA", 1429, "#96cce0", [780]],
  ["ANDR", 1469, "#de683c", [780.7]],
  ["AVAL", 1508.7, "#6c92ae", [952.4, 987.5, 998, 1010, 1062.6, 1121.3, 1185.5, 1204.7, 1300.7, 1410, 1474]],
  ["AYUT", 1548.6, "#cac9a2", [780.7, 983.6, 1017.7, 1278.2]],
  ["BAR1", 1588.4, "#4294d4", [1168.5, 1279.3]],
  ["C341", 1628.4, "#aaba5c", [1165.8]],
  ["C342", 1668, "#d88a30", [1165.8]],
];

function Timeline() {
  const years = Array.from({ length: 13 }, (_, i) => [1991 + i * 2, 708 + i * 116.5]);
  return (
    <svg width="1668" height="458" viewBox="538 1350 1668 458" className="block shrink-0 [font-kerning:normal]">
      {years.slice(1, -1).map(([y, x]) => <path key={y} d={`M${x} 1378V1709`} stroke="#ececec" strokeWidth="1.500" />)}
      <rect x="708" y="1484.500" width="1398" height="48" fill="#c95590" stroke="#dc9cc0" strokeWidth="1" />
      <rect x="692" y="1378" width="16" height="332" fill="#bfcddf" />
      <rect x="2106" y="1378" width="16" height="332" fill="#bfcddf" />
      <path d="M692 1709H2122" stroke="#bfcddf" strokeWidth="2" />
      {years.map(([y, x]) => (
        <g key={y}>
          <path d={`M${x} 1709V1718`} stroke="#bfcddf" strokeWidth="2" />
          <text x={x - 4.5} y="1749.500" textAnchor="middle" fontSize="20" fontFamily="DejaVu Sans, sans-serif" textLength="50" fill="#17343d">{y}</text>
        </g>
      ))}
      {series.map(([name, y, color, xs], i) => (
        <g key={name}>
          <g fontFamily="Liberation Sans, sans-serif" fontSize="20" fill="#17343d">
            <text x="670.500" y={1393.5 + i * 39.9} textAnchor="end">{name}</text>
            <text x="2131.500" y={1393.5 + i * 39.9}>{name}</text>
          </g>
          {xs.map((x, k) => (
            <g key={k}>
              <circle cx={x} cy={y} r="8" fill={color} />
              <circle cx={x} cy={y} r="2.400" fill="#fff" />
            </g>
          ))}
        </g>
      ))}
      <g fill="none" stroke="#000" strokeWidth="2">
        <rect x="541" y="1377" width="28" height="28" />
        <rect x="577" y="1377" width="28" height="28" />
        <rect x="559" y="1421" width="28" height="28" />
        <rect x="559" y="1457" width="28" height="28" />
        <path d="M546 1391H564M555 1382.500L547 1391L555 1399.500M582 1391H600M591 1382.500L599 1391L591 1399.500M564 1435H582M573 1426V1444M564 1471H582" />
      </g>
      <rect x="1939.500" y="1774.500" width="13" height="13" fill="#fff" stroke="#999" strokeWidth="6" />
      <circle cx="2052" cy="1781" r="6.500" fill="#fff" stroke="#999" strokeWidth="6" />
      <g fontFamily="Liberation Sans, sans-serif" fontWeight="700" fontSize="19" fill="#a2a2a2">
        <text x="1961" y="1788" textLength="64" lengthAdjust="spacingAndGlyphs">Station</text>
        <text x="2067" y="1788" textLength="131" lengthAdjust="spacingAndGlyphs">Campaign Site</text>
      </g>
    </svg>
  );
}

function Calendar() {
  return (
    <svg width="28" height="28" viewBox="0 0 28 28" className="shrink-0">
      <rect x="2" y="2" width="26" height="26" fill="#c9c9c9" />
      <rect x="0" y="0" width="26" height="26" fill="#777f84" />
      <rect x="1" y="1" width="24" height="6" fill="#a9c6e6" />
      <g fill="#fff">
        {[9, 14, 18.5, 23].map((y) => [2, 7, 12, 17, 22].map((x) => <rect key={`${x}-${y}`} x={x} y={y} width="3.500" height="2.800" />))}
      </g>
      <rect x="6.500" y="13.500" width="5" height="4" fill="none" stroke="#e8948c" strokeWidth="1" />
    </svg>
  );
}

function Check({ on, dim, className = "", children }) {
  return (
    <span className={`flex shrink-0 items-center ${className}`}>
      <span className={`flex size-7 shrink-0 items-center justify-center border-2 bg-linear-to-b from-[#f8f8ff] to-[#e0e0e8] ${dim ? "border-[#d0d0d8] border-r-[#b4b4c0] border-b-[#acacb6]" : "border-[#a8aab0] border-r-[#76787c] border-b-[#66686c]"}`}>
        {on && (
          <svg width="22" height="24" viewBox="0 0 22 24" className="-mt-1">
            <path d="M2 12L6 10L9 16L17 2L21 2L10 21H8Z" fill={dim ? "#979797" : "#2b333c"} />
          </svg>
        )}
      </span>
      <span className="pb-[3px] pl-[4px] whitespace-nowrap">{children}</span>
    </span>
  );
}

function Rule({ className }) {
  return <div className={`ml-4 h-[2px] w-[594px] shrink-0 bg-[#bec8ca] ${className}`} />;
}

function Cart() {
  return (
    <section className="mt-[4px] flex h-[1008px] shrink-0 flex-col rounded-t-[10px] border-t-2 border-[#c6dcd2] bg-[#afcbc0] pr-[14px] pb-[14px] pl-[14px]">
      <h3 className="flex h-[50px] shrink-0 items-center pb-[4px] pl-[10px] font-bold">Download Cart</h3>
      <div className="flex-1 bg-white">
        <div className="flex h-[650px] w-[626px] flex-col bg-[#efeffe]">
          <p className="pt-[15px] pl-[13px] text-[24px] leading-[33px] tracking-[0.05px] whitespace-nowrap">
            Use the checkboxes to specify which file
            <br />
            types you would like to add to your cart
            <br />
            (from your current result set).
          </p>
          <div className="mt-[24px] text-[#aab3b3]">
            <Check on dim className="ml-[100px] h-7">Limit data temporally:</Check>
            <div className="mt-[3px] ml-[104px] flex h-[28px] items-center tracking-[0.3px]">(no window defined)</div>
          </div>
          <Rule className="mt-[11px]" />
          <div className="text-[#aab3b3]">
            <h4 className="mt-[15px] flex h-[34px] items-center pl-[13px] text-[24px] font-bold tracking-[-0.05px]">Station File Types:</h4>
            <div className="mt-[7px] flex h-[28px] items-center pl-[14px]">
              <Check on dim className="w-[164px]">Hatanaka</Check>
              <Check dim className="w-[98px]">Nav</Check>
              <Check dim className="w-[94px]">QC</Check>
              <Check dim>Met</Check>
            </div>
          </div>
          <Rule className="mt-[10px]" />
          <div className="text-[#aab3b3]">
            <h4 className="mt-[14px] flex h-[34px] items-center pl-[13px] text-[24px] font-bold tracking-[-0.05px]">Station Product File Types:</h4>
            <div className="mt-[8px] flex h-[28px] items-center pl-[14px]">
              <Check dim className="w-[134px]">SINEX</Check>
              <Check dim className="w-[136px]">Velocity</Check>
              <Check dim className="w-[136px]">Position</Check>
              <Check dim>Position</Check>
            </div>
            <div className="-mt-1 h-[16px] pl-[464px] leading-[16px]">(csv)</div>
            <div className="mt-[12px] flex h-[28px] items-center pl-[14px]">
              <Check dim className="w-[134px]">UNR QA</Check>
              <Check dim>UCB H2O</Check>
            </div>
          </div>
          <Rule className="mt-[16px]" />
          <h4 className="mt-[11px] flex h-[34px] items-center pl-[13px] text-[24px] font-bold tracking-[-0.05px]">Campaign File Types:</h4>
          <div className="mt-[7px] flex h-[28px] items-center pl-[14px]">
            <Check on className="w-[114px]">Data</Check>
            <Check>Documentation</Check>
          </div>
          <Rule className="mt-[8px]" />
          <div className="mt-[34px] flex justify-between pr-4 pl-4">
            <Btn tone="lav" className="h-[50px] w-[140px]">Cancel</Btn>
            <Btn tone="green" className="h-[50px] w-[180px]">Add to cart</Btn>
          </div>
        </div>
      </div>
    </section>
  );
}

function Browser() {
  return (
    <section className="mt-3 flex h-[748px] shrink-0 flex-col rounded-t-[10px] border-t-2 border-[#c6dcd2] bg-[#afcbc0] pr-[15px] pb-3 pl-[14px]">
      <header className="flex h-[50px] shrink-0 items-center justify-between pb-[2px] pl-[10px] font-bold">
        Result Browser
        <span className="flex gap-2">
          <MiniBtn />
          <MiniBtn plus />
        </span>
      </header>
      <div className="flex min-h-0 flex-1 flex-col bg-white px-[10px] pt-[10px] pr-3 pb-[10px]">
        <div className="h-[70px] w-[616px] shrink-0 border-2 border-[#b7babc] pt-[8px] pl-1 font-bold">Site detail pages:</div>
        <div className="mt-1 flex h-[42px] w-[616px] shrink-0 font-bold">
          <span className="z-10 flex h-[44px] w-[237px] items-center justify-center rounded-t-[8px] border-2 border-b-0 border-[#b7babc] bg-white pt-[2px] pl-[2px] tracking-[-0.1px]">Position Timeseri...</span>
          <span className="flex w-[138px] items-center justify-center rounded-t-[8px] border-2 border-l-0 border-[#b7babc] bg-linear-to-b from-[#f6f6f6] to-[#e2e2e2]">Site Photo</span>
          <span className="flex w-[237px] items-center justify-center rounded-t-[8px] border-2 border-l-0 border-[#b7babc] bg-linear-to-b from-[#f6f6f6] to-[#e2e2e2] pl-[2px] tracking-[-0.1px]">Latest Configurat...</span>
        </div>
        <div className="flex min-h-0 w-[616px] flex-1 flex-col border-2 border-[#aab3b3]">
          <b className="mt-[22px] flex h-9 shrink-0 items-center pl-[24px] text-[24px]">SJDL</b>
          <div className="mt-[12px] ml-5 flex w-[415px] flex-1 flex-col items-center bg-[#cbcbcb] pt-[151px] font-['Noto_Sans',sans-serif] text-[35px] leading-[49px] font-semibold text-white">
            <span>Position Timeseries</span>
            <span>Not Available</span>
          </div>
        </div>
      </div>
    </section>
  );
}

export default function App() {
  return (
    <div className="flex h-[1820px] w-[2946px] flex-col overflow-hidden border-t-4 border-[#2b2b2d] bg-[#b8babb] font-['DejaVu_Sans',Verdana,sans-serif] text-[20px] leading-none text-[#17343d] [font-kerning:none]">
      <div className="flex min-h-0 flex-1">
        <main className="flex w-[2252px] shrink-0 flex-col">
          <TopHeader />
          <Panel title="Metadata" options="Metadata Options" bar="bg-[#a0b1d5] border-[#b6c6e3]" height="h-[542px]">
            <div className="w-[526px] shrink-0 pt-[10px]">
              <Btn className="ml-[390px] h-11 w-20">Clear</Btn>
              <LabeledInput label="4-char ID(s):" className="-mt-[11px] h-[27px]" />
              <LabeledInput label="Site/Marker Name:" className="h-10 pt-[14px]" />
              <LabeledInput label="Network/Campaign:" className="h-10 pt-[14px]" />
            </div>
            <Table />
          </Panel>
          <Grip />
          <Panel title="Spatial" options="Spatial Options" bar="bg-[#a0b1d5] border-[#b6c6e3]" height="h-[526px]">
            <div className="w-[526px] shrink-0 pt-5">
              <div className="flex h-7 items-center pl-[114px] font-bold">
                <span className="w-[171px] text-[#aab3b3]">Bounding box</span>
                <i className="h-6 w-[2px] bg-[#bec8ca]" />
                <span className="pl-[17px]">Radius</span>
              </div>
              <div className="mt-[14px] flex gap-[30px] pl-[100px]">
                <Btn tone="blue" className="h-11 w-[160px]">Draw box...</Btn>
                <Btn className="h-11 w-20">Clear</Btn>
              </div>
              <div className="flex h-[42px] w-[450px] items-center justify-center pt-1">N</div>
              <Field className="ml-[144px] h-10 w-[156px]">20.0228</Field>
              <div className="mt-1 flex h-10 items-center gap-1 pl-[39px]">
                <span className="w-[23px] pt-[12px]">W</span>
                <Field className="h-10 w-[156px]">-104.0991</Field>
                <Field className="h-10 w-[156px]">-94.8266</Field>
                <span className="pt-[12px] pl-[3px]">E</span>
              </div>
              <Field className="mt-1 ml-[144px] h-10 w-[156px]">14.6983</Field>
              <div className="flex h-[34px] w-[450px] items-center justify-center">S</div>
              <div className="mt-[113px] flex h-[27px] items-center pl-[14px] tracking-[0.1px]">18.491805, -103.541296</div>
            </div>
            <MapView />
          </Panel>
          <Grip />
          <Panel title="Temporal" options="Temporal Options" bar="bg-[#bfc6d5] border-[#ced5e2] !pb-3" height="h-[522px]">
            <div className="w-[526px] shrink-0 pt-[30px]">
              <div className="flex gap-5 pl-[60px]">
                <Btn tone="blue" className="h-11 w-[210px]">Draw window...</Btn>
                <Btn className="h-11 w-20">Clear</Btn>
              </div>
              <div className="mt-7 flex h-11 items-center gap-1">
                <span className="w-[162px] pb-[2px] text-right">Start:</span>
                <Field className="h-11 w-[168px]" />
                <Calendar />
              </div>
              <div className="flex h-10 w-[479px] items-center justify-center pb-[5px]">to</div>
              <div className="flex h-11 items-center gap-1">
                <span className="w-[162px] pb-[2px] text-right">End:</span>
                <Field className="h-11 w-[168px]" />
                <Calendar />
              </div>
            </div>
            <Timeline />
            <Scrollbar className="mt-[10px] h-[400px]" thumb="h-[32px]" />
          </Panel>
        </main>
        <div className="flex w-5 shrink-0 items-center justify-center pb-0.5">
          <div className="flex h-8 w-3 justify-between border-l border-white/70">
            <i className="w-[2px] bg-[#74787a]" />
            <i className="w-[2px] bg-[#74787a]" />
            <i className="w-[2px] bg-[#74787a]" />
          </div>
        </div>
        <aside className="flex flex-1 flex-col border-r-2 border-[#1c1c1c] bg-[#666666] pl-2">
          <div className="flex h-11 shrink-0 items-center justify-between pr-[7px] pl-1 text-[24px] tracking-[0.3px] text-white">
            Side Panel
            <svg width="40" height="40" viewBox="0 0 40 40">
              <circle cx="20" cy="20" r="17.500" fill="#fff" stroke="#17252d" strokeWidth="3.500" />
              <path d="M8 16H20V11L32 20L20 29V24H8Z" fill="#17252d" />
            </svg>
          </div>
          <Cart />
          <Browser />
        </aside>
      </div>
    </div>
  );
}
